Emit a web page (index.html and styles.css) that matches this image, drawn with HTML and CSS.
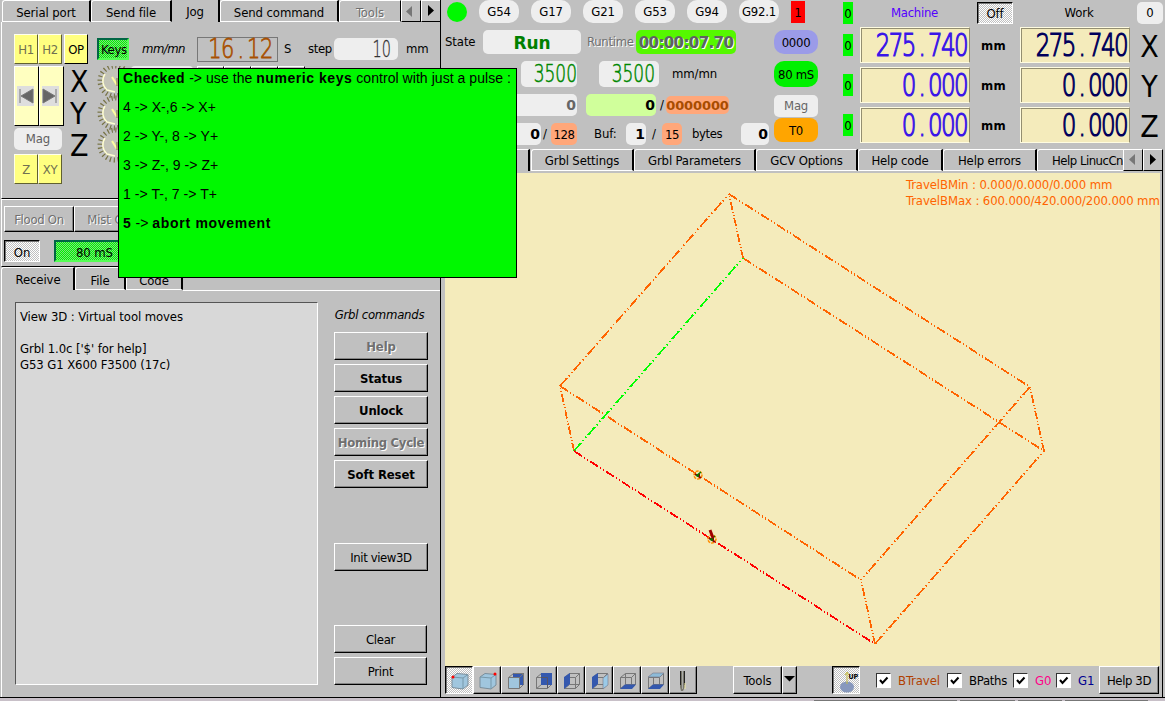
FILE: index.html
```html
<!DOCTYPE html>
<html lang="en">
<head>
<meta charset="utf-8">
<title>GRBL control</title>
<link rel="stylesheet" href="styles.css">
</head>
<body>
<svg width="0" height="0" class="defs">
  <defs>
    <g id="dial">
      <circle cx="18" cy="18" r="15" fill="none" stroke="#777344" stroke-width="5" stroke-dasharray="1.2 2.72"/>
      <circle cx="18" cy="18" r="12" fill="#c4c4b8"/>
      <path d="M8 11A12 12 0 0 0 10 27L18 29" fill="none" stroke="#fffed0" stroke-width="1.4"/>
      <path d="M15 14L20 22" stroke="#fffca0" stroke-width="2"/>
      <path d="M20 15V23" stroke="#77733c"/>
    </g>
    <g id="wire" fill="none" stroke="#777" stroke-width="1">
      <path d="M6.500 10.500L11.500 6.500H21.500L17.500 10.500ZM6.500 10.500V21.500H17.500V10.500M11.500 6.500V17.500H21.500V6.500M6.500 21.500L11.500 17.500M17.500 21.500L21.500 17.500"/>
    </g>
    <g id="solid">
      <path d="M6 10L11 6.500L22 7.500V18L17 22L6 20.500Z" fill="#a0c6de" stroke="#7a8e9b"/>
      <path d="M6 10L17 11L22 7.500M17 11V22" fill="none" stroke="#7798aa"/>
    </g>
    <g id="tick"><path d="M3 6L5.500 9L10.500 3.500" fill="none" stroke="#000" stroke-width="2"/></g>
    <g id="marker" fill="none"><circle r="4" stroke="#ff8c00" stroke-width="1.5" stroke-dasharray="3 1"/><path d="M-3 -1L3 3M-2 0H2" stroke="#8b0000" stroke-width="2"/><path d="M-2 1L3 -3M0 0V2" stroke="#008000" stroke-width="1.5"/></g>
  </defs>
</svg>
<div class="app">
  <section class="left">
    <div class="tabs tabs-jog">
      <span class="tab t-serial">Serial port</span><span class="tab t-send">Send file</span><span class="tab on t-jog">Jog</span><span class="tab t-cmd">Send command</span><span class="tab off t-tools">Tools</span>
      <span class="scroll"><svg width="18" height="22"><path d="M10 5L4 10.500L10 16Z" fill="#777"/></svg></span><span class="scroll"><svg width="18" height="22"><path d="M6 4L12 9.500L6 15Z"/></svg></span>
    </div>
    <div class="jog">
      <div class="jog-top">
        <span class="yb">H1</span><span class="yb">H2</span><span class="yb op">OP</span>
        <span class="keys">Keys</span><i class="unit">mm/mn</i>
        <span class="lcd lcd-speed"><span class="digits">16<u>.</u>12</span></span><span class="s">S</span><span class="step">step</span>
        <span class="lcd lcd-step"><span class="digits">10</span></span><span class="mm">mm</span>
      </div>
      <div class="jog-body">
        <div class="jog-side">
          <div class="arrows">
            <span class="arrow"><svg width="17" height="20"><rect width="17" height="20" fill="#dedede"/><path d="M3 3V17M4 10L16 3V17Z" fill="#666" stroke="#777"/></svg></span>
            <span class="arrow"><svg width="17" height="20"><rect width="17" height="20" fill="#dedede"/><path d="M14 3V17M13 10L1 3V17Z" fill="#666" stroke="#777"/></svg></span>
          </div>
          <div class="pill mag-left">Mag</div>
          <div class="zxy"><span class="yb">Z</span><span class="yb">XY</span></div>
        </div>
        <div class="axes"><span>X</span><span>Y</span><span>Z</span></div>
        <div class="dials"><svg width="36" height="98"><use href="#dial" y="-3"/><use href="#dial" y="29"/><use href="#dial" y="61"/></svg></div>
        <div class="covered"><i></i><b></b><b></b><b></b><b></b></div>
      </div>
    </div>
    <div class="coolant">
      <div class="cool-row"><span class="btn off flood">Flood On</span><span class="btn off mist">Mist On</span></div>
      <div class="cool-row second"><span class="sunk on-btn">On</span><span class="ms">80 mS</span></div>
    </div>
    <div class="tabs tabs-receive"><span class="tab on t-rec">Receive</span><span class="tab t-file">File</span><span class="tab t-code">Code</span></div>
    <div class="receive">
      <div class="log">View 3D : Virtual tool moves<br><br>Grbl 1.0c ['$' for help]<br>G53 G1 X600 F3500 (17c)</div>
      <div class="commands">
        <i>Grbl commands</i>
        <span class="btn strong off">Help</span><span class="btn strong">Status</span><span class="btn strong">Unlock</span><span class="btn strong off homing">Homing Cycle</span><span class="btn strong">Soft Reset</span>
        <span class="btn init">Init view3D</span><span class="btn narrow">Clear</span><span class="btn narrow">Print</span>
      </div>
    </div>
  </section>
  <section class="right">
    <div class="status">
      <div class="state">
        <div class="r r1"><span class="led"></span><span class="pill g">G54</span><span class="pill g">G17</span><span class="pill g">G21</span><span class="pill g">G53</span><span class="pill g">G94</span><span class="pill g">G92.1</span><span class="red">1</span></div>
        <div class="lower">
          <div class="readings">
            <div class="r r2"><span class="w-state">State</span><span class="pill run">Run</span><span class="off w-runtime">Runtime</span><span class="pill time">00:00:07.70</span></div>
            <div class="r r3"><span class="lcd green f1"><span class="digits">3500</span></span><span class="lcd green f2"><span class="digits">3500</span></span><span>mm/mn</span></div>
            <div class="r r4"><span class="pill num n1">0</span><span class="pill num n2">0</span><span class="slash">/</span><span class="pill total">0000000</span></div>
            <div class="r r5"><span class="pill num n3">0</span><span class="sl1">/</span><span class="pill salmon c128">128</span><span class="buf">Buf:</span><span class="pill num n4">1</span><span class="sl2">/</span><span class="pill salmon c15">15</span><span class="bytes">bytes</span><span class="pill num n5">0</span></div>
          </div>
          <div class="badges"><span class="pill violet">0000</span><span class="pill pulse">80 mS</span><span class="pill mag">Mag</span><span class="pill tool">T0</span></div>
        </div>
      </div>
      <div class="dro">
        <div class="dro-head"><span class="zero">0</span><span class="machine">Machine</span><span class="sunk off-btn">Off</span><span class="work">Work</span><span class="pill work-zero">0</span></div>
        <div class="dro-row"><span class="zero">0</span><span class="lcd coord blue"><span class="digits">275<u>.</u>740</span></span><b>mm</b><span class="lcd coord"><span class="digits">275<u>.</u>740</span></span><span class="axis">X</span></div>
        <div class="dro-row"><span class="zero">0</span><span class="lcd coord blue"><span class="digits">0<u>.</u>000</span></span><b>mm</b><span class="lcd coord"><span class="digits">0<u>.</u>000</span></span><span class="axis">Y</span></div>
        <div class="dro-row"><span class="zero">0</span><span class="lcd coord blue"><span class="digits">0<u>.</u>000</span></span><b>mm</b><span class="lcd coord"><span class="digits">0<u>.</u>000</span></span><span class="axis">Z</span></div>
      </div>
    </div>
    <div class="tabs tabs-view">
      <span class="tab on t-view"></span><span class="tab t-gs">Grbl Settings</span><span class="tab t-gp">Grbl Parameters</span><span class="tab t-gcv">GCV Options</span><span class="tab t-hc">Help code</span><span class="tab t-he">Help errors</span><span class="tab t-hl">Help LinucCn</span>
      <span class="scroll"><svg width="18" height="22"><path d="M11 4L5 9.500L11 15Z" fill="#777"/></svg></span><span class="scroll"><svg width="18" height="22"><path d="M6 4L12 9.500L6 15Z"/></svg></span>
    </div>
    <div class="view">
      <svg class="scene" width="715" height="493" viewBox="445 173 715 493">
        <g class="travel">
          <path pathLength="301" d="M729 194L1030 387"/><path pathLength="193" d="M1030 387L861 580"/><path pathLength="301" d="M560 386L861 580"/><path pathLength="193" d="M560 386L729 194"/>
          <path pathLength="64" d="M743 258L729 194"/><path pathLength="64" d="M1044 451L1030 387"/><path pathLength="64" d="M875 644L861 580"/><path pathLength="64" d="M574 451L560 386"/>
          <path pathLength="301" d="M743 258L1044 451"/><path pathLength="193" d="M875 644L1044 451"/>
          <path class="y-axis" pathLength="193" d="M574 451L743 258"/><path class="x-axis" pathLength="301" d="M574 451L875 644"/>
        </g>
        <use href="#marker" x="698" y="475"/><use href="#marker" x="712" y="539"/><path d="M710 530L713 538" stroke="#a00000" stroke-width="3"/>
      </svg>
      <div class="travel-text">TravelBMin : 0.000/0.000/0.000 mm<br>TravelBMax : 600.000/420.000/200.000 mm</div>
    </div>
    <div class="toolbar">
      <span class="ib sunk"><svg width="27" height="27"><use href="#solid"/><circle cx="7" cy="10" r="1.500" fill="red"/></svg></span>
      <span class="ib"><svg width="27" height="27"><use href="#solid"/><circle cx="21" cy="7" r="1.500" fill="red"/></svg></span>
      <span class="ib"><svg width="27" height="27"><path d="M11 6H22V18H11Z" fill="#3458ae"/><path d="M6 10H17V22H6Z" fill="#a0c6de"/><path d="M6.500 10.500H17.500V21.500H6.500ZM6.500 10.500L11.500 6.500H21.500V17.500L17.500 21.500M17.500 10.500L21.500 6.500" fill="none" stroke="#777"/></svg></span>
      <span class="ib"><svg width="27" height="27"><use href="#wire"/><path d="M11 6H22V18H11Z" fill="#3458ae"/><path d="M17.500 21V10.500H11" fill="none" stroke="#556"/></svg></span>
      <span class="ib"><svg width="27" height="27"><use href="#wire"/><path d="M6 10L12 6V17L6 22Z" fill="#3458ae"/></svg></span>
      <span class="ib"><svg width="27" height="27"><use href="#wire"/><path d="M6 10L12 6V17L6 22Z" fill="#3458ae"/><path d="M17 11L22 7V18L17 22Z" fill="#9bcae8" stroke="#778" stroke-width=".6"/></svg></span>
      <span class="ib"><svg width="27" height="27"><use href="#wire"/><path d="M6 22L11 17.500H22L18 22Z" fill="#3458ae"/></svg></span>
      <span class="ib"><svg width="27" height="27"><use href="#wire"/><path d="M6 22L11 17.500H22L18 22Z" fill="#3458ae"/><path d="M6 10L11 6H22L18 10Z" fill="#8dbbd8" stroke="#778" stroke-width=".6"/></svg></span>
      <span class="ib"><svg width="27" height="27"><path d="M10 4V20L11 24H13L15 20V4Z" fill="#77776a"/><path d="M10.500 4V18M14.500 4V18" stroke="#222"/><path d="M12.500 4V22" stroke="#aaa"/><path d="M15 16V22" stroke="#eee8a0"/></svg></span>
      <span class="btn tools">Tools</span><span class="btn drop"><svg width="14" height="26"><path d="M1 9H12L6.500 14.500Z"/></svg></span>
      <span class="ib sunk up"><svg width="27" height="27"><ellipse cx="14" cy="20" rx="7" ry="5.500" fill="#8798bd"/><path d="M14 17V6M12 8L14 5L16 8" fill="none" stroke="#c7bd45"/><text x="15.500" y="12" class="up-text">UP</text></svg></span>
      <span class="check"><svg width="13" height="13"><use href="#tick"/></svg></span><span class="lb btravel">BTravel</span>
      <span class="check"><svg width="13" height="13"><use href="#tick"/></svg></span><span class="lb bpaths">BPaths</span>
      <span class="check"><svg width="13" height="13"><use href="#tick"/></svg></span><span class="lb g0">G0</span>
      <span class="check"><svg width="13" height="13"><use href="#tick"/></svg></span><span class="lb g1">G1</span>
      <span class="btn help3d">Help 3D</span>
    </div>
  </section>
</div>
<div class="footer"><i></i><i></i><i></i><i></i></div>
<div class="tooltip">
  <p class="wide"><b>Checked</b> -&gt; use the <b>numeric keys</b> control with just a pulse :</p>
  <p>4 -&gt; X-,6 -&gt; X+</p><p>2 -&gt; Y-, 8 -&gt; Y+</p><p>3 -&gt; Z-, 9 -&gt; Z+</p><p>1 -&gt; T-, 7 -&gt; T+</p>
  <p class="last"><b>5</b> -&gt; <b>abort movement</b></p>
</div>
</body>
</html>
```
FILE: styles.css
```css
* { box-sizing: border-box; }
body { margin: 0; width: 1165px; height: 701px; overflow: hidden; background: #c0c0c0; color: #000; font: 13px/16px "DejaVu Sans Condensed", "DejaVu Sans", sans-serif; font-stretch: condensed; letter-spacing: -.1px; white-space: nowrap; position: relative; }
svg { display: block; flex: none; }
.defs { position: absolute; }
.app { display: flex; height: 698px; border-bottom: 1px solid #000; }
.left { width: 441px; flex: none; border-right: 1px solid #000; padding-left: 1px; display: flex; flex-direction: column; }
.right { width: 724px; flex: none; display: flex; flex-direction: column; background: linear-gradient(#000, #000) 721px 150px/1px 548px no-repeat; }
.off { color: #707070; text-shadow: 1px 1px #fff; }

/* tabs */
.tabs { display: flex; flex: none; overflow: hidden; }
.tab { flex: none; display: flex; align-items: center; justify-content: center; border-top: 1px solid #fff; border-left: 1px solid #fff; border-right: 2px solid #000; border-bottom: 1px solid #fff; border-top-left-radius: 3px; overflow: hidden; }
.tab.on { border-bottom: 0; }
.scroll { flex: none; width: 20px; border: 1px solid; border-color: #fff #000 #000 #fff; overflow: hidden; }
.tabs-jog { height: 22px; }
.tabs-jog .tab { padding-top: 3px; }
.t-serial { width: 89px; margin-left: 1px; }
.t-send { width: 81px; }
.tabs-jog .t-jog { width: 48px; border-left: 0; border-top: 0; padding-top: 2px; }
.t-cmd { width: 119px; }
.t-tools { width: 62px; border-right: 1px solid #000; }

/* jog panel */
.jog { height: 177px; flex: none; border-left: 1px solid #fff; border-bottom: 1px solid #000; padding: 12px 0 0 12px; }
.jog-top { display: flex; height: 30px; align-items: center; }
.yb { width: 24px; height: 30px; flex: none; display: flex; align-items: center; justify-content: center; background: #ffff80; border: 1px solid; border-color: #fffff0 #606030 #606030 #ffffe0; color: #707050; padding-top: 2px; letter-spacing: -.4px; }
.yb.op { width: 24px; margin-left: 2px; color: #000; border-color: #fff #000 #000 #fff; }
.keys { width: 32px; height: 22px; margin-left: 9px; padding: 2px 0 0 2px; letter-spacing: -.4px; border: 2px solid; border-color: #064 #5f5 #5f5 #064; background: repeating-conic-gradient(#00f800 0 25%, #80d880 0 50%) 0 0/2px 2px; }
.unit { width: 55px; margin-left: 13px; letter-spacing: -.5px; }

/* numeric displays: tall digits on a fixed pitch, the point takes a full cell */
.lcd { font-family: "DejaVu Sans", sans-serif; font-weight: 200; flex: none; display: flex; align-items: center; justify-content: flex-end; line-height: 1; letter-spacing: 0; }
.digits { display: block; transform: scaleY(1.3); }
.digits u { display: inline-block; text-decoration: none; text-align: center; width: 13px; }
.lcd-speed { width: 81px; height: 25px; border: 1px solid #777; color: #a85000; font-size: 21px; padding-right: 4px; letter-spacing: -.4px; -webkit-text-stroke: .6px; }
.s { margin-left: 6px; width: 24px; }
.step { width: 26px; letter-spacing: -.4px; }
.lcd-step { width: 64px; height: 22px; border-radius: 5px; background: #eee; font-size: 14.500px; padding-right: 7px; color: #333; -webkit-text-stroke: .2px; }
.lcd-step .digits { transform: scaleY(1.6); }
.mm { margin-left: 8px; }
.jog-body { display: flex; padding-top: 2px; }
.jog-side { width: 50px; flex: none; }
.arrows { display: flex; height: 60px; }
.arrow { width: 25px; display: flex; align-items: center; justify-content: center; background: #ffffc0; border: 1px solid; border-color: #fff #000 #000 #fff; }
.arrow svg { margin-left: -2px; }
.pill { display: flex; align-items: center; justify-content: center; background: #eee; border-radius: 5px; flex: none; }
.mag-left { width: 48px; height: 22px; margin-top: 2px; color: #606060; }
.zxy { display: flex; margin-top: 4px; }
.axes { width: 30px; flex: none; display: flex; flex-direction: column; font-size: 30px; line-height: 32px; padding-left: 6px; }
.dials { width: 37px; flex: none; padding-left: 3px; }
.covered { display: flex; height: 4px; }
.covered i { width: 62px; background: #eee; margin-right: 4px; border-radius: 5px 5px 0 0; }
.covered b { width: 27px; border: 1px solid; border-color: #fff #000 #000 #fff; border-bottom: 0; }

.coolant { height: 68px; flex: none; border-left: 1px solid #fff; border-top: 1px solid #fff; border-bottom: 1px solid #000; padding: 6px 0 0 2px; }
.cool-row { display: flex; }
.btn { flex: none; display: flex; align-items: center; justify-content: center; border: 1px solid; border-color: #fff #000 #000 #fff; box-shadow: inset -1px -1px #858585; }
.sunk { display: flex; align-items: center; justify-content: center; border: 1px solid; border-color: #000 #fff #fff #000; box-shadow: inset 1px 1px #777; background: repeating-conic-gradient(#fff 0 25%, #c0c0c0 0 50%) 0 0/2px 2px; flex: none; }
.flood { width: 70px; height: 26px; padding-top: 2px; letter-spacing: -.3px; }
.mist { width: 67px; height: 26px; padding: 2px 0 0 3px; }
.second { margin-top: 8px; }
.on-btn { width: 36px; height: 22px; padding-top: 3px; }
.ms { margin-left: 14px; width: 82px; height: 22px; padding: 3px 0 0 20px; border: 2px solid; border-color: #064 #5f5 #5f5 #064; background: repeating-conic-gradient(#00f800 0 25%, #80d880 0 50%) 0 0/2px 2px; }

.tabs-receive { height: 23px; }
.tabs-receive .t-rec { width: 74px; padding: 2px 0 0 1px; }
.t-file { width: 51px; padding-top: 4px; }
.t-code { width: 57px; padding-top: 4px; }
.receive { flex: 1; min-height: 0; border-left: 1px solid #fff; display: flex; padding: 12px 0 0 13px; background: linear-gradient(#fff, #fff) 181px 0/260px 1px no-repeat; }
.log { width: 303px; height: 383px; border: 1px solid; border-color: #555 #fff #fff #555; background: #d8d8d8; padding: 6px 4px; }
.commands { width: 94px; margin-left: 16px; display: flex; flex-direction: column; }
.commands i { height: 30px; padding: 5px 3px 0 0; text-align: center; letter-spacing: -.25px; }
.commands .btn { height: 28px; margin-bottom: 4px; padding-top: 1px; }
.strong { font-weight: bold; }
.homing { letter-spacing: -.3px; }
.commands .init { margin-top: 51px; margin-bottom: 54px; letter-spacing: -.4px; }
.narrow { width: 93px; letter-spacing: -.3px; }

/* status area */
.status { display: flex; height: 149px; flex: none; }
.state { width: 399px; flex: none; }
.r { display: flex; align-items: center; }
.r1 { height: 23px; padding-left: 6px; }
.led { width: 20px; height: 20px; border-radius: 50%; background: #00f800; }
.g { width: 40px; height: 23px; border-radius: 10px; margin-left: 12px; letter-spacing: -.2px; }
.red { margin-left: 12px; width: 14px; height: 22px; background: red; text-align: center; line-height: 24px; }
.lower { display: flex; padding-top: 7px; }
.readings { width: 333px; flex: none; }
.r2 { height: 24px; padding-left: 4px; }
.w-state { width: 38px; }
.run { width: 98px; height: 24px; font: bold 17px "DejaVu Sans"; color: #008000; padding-top: 2px; }
.w-runtime { width: 49px; margin-left: 6px; letter-spacing: -.3px; }
.time { width: 100px; height: 24px; background: #55f800; color: #606060; font: bold 15px "DejaVu Sans"; font-stretch: normal; text-shadow: 1px 1px #fff; letter-spacing: -.6px; padding-top: 1px; }
.r3 { height: 26px; margin-top: 7px; padding-left: 80px; }
.green { height: 26px; background: #eee; border-radius: 5px; color: #080; font-size: 17px; -webkit-text-stroke: .4px; }
.green .digits { transform: scaleY(1.45); }
.f1 { width: 56px; } .f2 { width: 60px; margin: 0 13px 0 22px; padding-right: 4px; }
.num { font: bold 14px "DejaVu Sans"; justify-content: flex-end; height: 22px; padding-right: 1px; }
.r4 { height: 22px; margin-top: 7px; padding-left: 36px; }
.n1 { width: 100px; color: #666; }
.n2 { width: 70px; background: #d0ff9b; margin-left: 9px; }
.slash { margin-left: 4px; width: 6px; }
.total { width: 63px; height: 18px; background: #ffa77a; color: #a84c00; font: bold 13px "DejaVu Sans"; letter-spacing: -.1px; }
.r5 { height: 22px; margin-top: 7px; padding-left: 36px; }
.n3 { width: 64px; } .sl1 { width: 8px; margin-left: 2px; }
.salmon { background: #ffa77a; height: 22px; letter-spacing: -.4px; padding-top: 1px; }
.c128 { width: 26px; } .buf { width: 32px; margin-left: 17px; }
.n4 { width: 20px; } .sl2 { width: 10px; margin-left: 6px; }
.c15 { width: 20px; } .bytes { margin-left: 10px; width: 49px; letter-spacing: -.4px; } .n5 { width: 28px; }
.badges { width: 44px; display: flex; flex-direction: column; letter-spacing: -.3px; }
.violet { height: 24px; background: #9b9be8; border-radius: 10px; padding-top: 1px; }
.pulse { height: 26px; margin-top: 7px; border-radius: 10px; background: #00f000; padding-top: 1px; }
.mag { height: 22px; margin-top: 8px; color: #666; }
.tool { height: 24px; margin-top: 1px; border-radius: 8px; background: #ffa500; padding-top: 1px; }
.dro { width: 325px; }
.dro-head { height: 25px; display: flex; align-items: center; padding-left: 3px; }
.zero { width: 10px; height: 22px; background: #00f800; line-height: 24px; text-align: center; flex: none; }
.machine { width: 124px; text-align: center; color: #5500ff; letter-spacing: -.3px; padding-right: 1px; }
.off-btn { width: 36px; height: 22px; padding-top: 3px; }
.work { width: 124px; padding-left: 8px; text-align: center; }
.work-zero { width: 26px; height: 22px; }
.dro-row { display: flex; height: 40px; align-items: center; padding-left: 3px; }
.coord { width: 110px; height: 36px; margin-left: 7px; background: #f4ebbb; border: 1px solid; border-color: #fffce0 #938e70 #fffce0 #fffce0; box-shadow: inset 1px 1px #938e70; color: #00005b; font-size: 23px; letter-spacing: -1.6px; padding-right: 2px; -webkit-text-stroke: .9px; }
.coord .digits { transform: scaleY(1.38); }
.coord.blue { color: #3a16e8; }
.dro-row b { width: 43px; flex: none; padding: 2px 0 0 4px; text-align: center; letter-spacing: .4px; }
.dro-row b + .coord { margin-left: 7px; }
.axis { width: 35px; flex: none; padding-left: 4px; text-align: center; font-size: 30px; line-height: 32px; padding-top: 3px; }

.tabs-view { height: 22px; }
.tabs-view .tab { padding-top: 2px; letter-spacing: -.15px; }
.tabs-view .t-view { width: 89px; }
.t-gs { width: 103px; margin-left: 1px; }
.t-gp { width: 122px; } .t-gcv { width: 102px; } .t-hc { width: 85px; } .t-he { width: 94px; }
.tabs-view .t-hl { width: 86px; border-right: 0; justify-content: flex-start; padding-left: 14px; letter-spacing: -.5px; }
.view { height: 493px; flex: none; margin: 2px 0 0 4px; width: 715px; background: #f4ebbb; display: grid; }
.scene, .travel-text { grid-area: 1 / 1; }
.travel { fill: none; stroke: #ff6400; stroke-width: 1.8; stroke-dasharray: 8 2 1 2 1 2; shape-rendering: crispEdges; }
.travel .y-axis { stroke: #0f0; }
.travel .x-axis { stroke: #f00; }
.travel-text { color: #ff6400; padding: 4px 0 0 461px; letter-spacing: -.1px; }

.toolbar { height: 28px; flex: none; display: flex; align-items: center; padding-left: 4px; }
.ib { width: 28px; height: 28px; flex: none; border: 1px solid; border-color: #fff #000 #000 #fff; overflow: hidden; box-shadow: inset -1px -1px #858585; }
.ib.sunk { border-color: #000 #fff #fff #000; box-shadow: inset 1px 1px #777; }
.tools { width: 49px; height: 28px; margin-left: 36px; padding-top: 1px; }
.drop { width: 15px; height: 28px; }
.up { margin-left: 35px; }
.up-text { font: bold 7px "DejaVu Sans Condensed"; letter-spacing: 0; }
.check { width: 15px; height: 15px; background: #fff; border: 1px solid; border-color: #333 #fff #fff #333; flex: none; }
.up + .check { margin-left: 16px; }
.lb { margin-left: 7px; padding-top: 1px; flex: none; }
.btravel { width: 49px; color: #b04000; } .bpaths { width: 44px; letter-spacing: -.3px; } .g0 { width: 21px; color: #f08; } .g1 { width: 21px; color: #000090; }
.help3d { width: 60px; height: 28px; letter-spacing: -.4px; padding-top: 1px; }

.footer { display: flex; gap: 3px; height: 3px; padding: 2px 0 0 814px; background: #c8c0c8; }
.footer i { width: 143px; background: #777; }
.footer i:nth-child(2) { width: 55px; } .footer i:nth-child(3) { width: 44px; } .footer i:nth-child(4) { width: 83px; }

/* help popup for the Keys toggle */
.tooltip { position: absolute; left: 118px; top: 68px; width: 399px; height: 210px; border: 1px solid #000; background: #00f800; padding: 1px 4px; font: 14px/16px "Liberation Sans", Arial, sans-serif; letter-spacing: 0; }
.tooltip p { margin: 0 0 13px; letter-spacing: .05px; }
.tooltip b { letter-spacing: .55px; }
.tooltip .last b { letter-spacing: .7px; }
```
